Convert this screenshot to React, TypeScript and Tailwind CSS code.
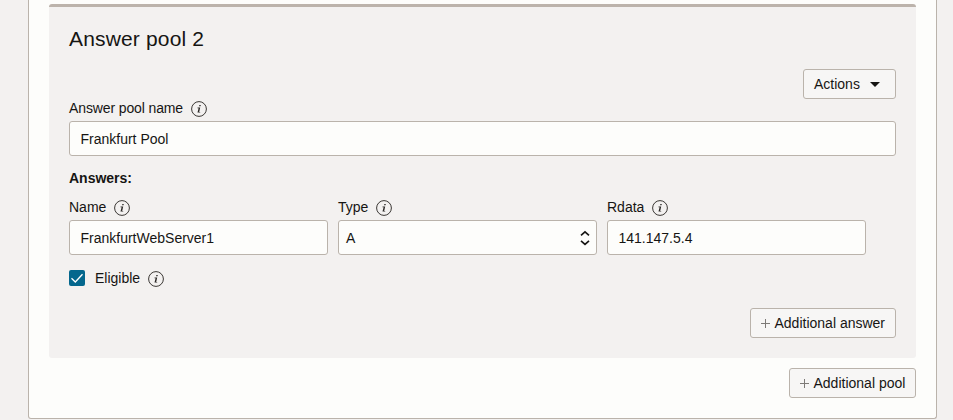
import type { ReactNode } from "react";

function InfoIcon() {
  return (
    <svg className="mt-px block h-4 w-4 shrink-0" viewBox="0 0 16 16" fill="none">
      <circle cx="8" cy="8" r="7.4" stroke="#3a3734" strokeWidth="1" />
      <path d="M8.4 3.9h1.4l-.3 1.4H8.1z" fill="#2b2826" />
      <path d="M6.6 6.6h2.6l-1 4.3h1.1l-.2.7H6.5l1.1-4.3H6.4z" fill="#2b2826" />
    </svg>
  );
}

function Label({ children, tight = false }: { children: ReactNode; tight?: boolean }) {
  return (
    <div className="flex h-[18px] items-center gap-2 leading-[18px]">
      <span className={tight ? "tracking-[-0.12px]" : ""}>{children}</span>
      <InfoIcon />
    </div>
  );
}

function Field({ label, value, select = false, tight = false }: { label: string; value: string; select?: boolean; tight?: boolean }) {
  return (
    <div className="flex flex-col gap-1">
      <Label tight={tight}>{label}</Label>
      <div
        className={`flex h-[35px] items-center justify-between rounded-[3px] border border-[#bab3ab] bg-[#fdfdfb] pr-[6px] ${select ? "pl-[7px]" : "pl-[10.5px]"}`}
      >
        <span>{value}</span>
        {select && (
          <svg className="mt-px block h-4 w-[10px]" viewBox="0 0 10 16" fill="none" stroke="#161513" strokeWidth="1.7">
            <path d="M1 5.3 5 1.9l4 3.4M1 10.9l4 3.4 4-3.4" />
          </svg>
        )}
      </div>
    </div>
  );
}

function AddButton({ width, children }: { width: string; children: ReactNode }) {
  return (
    <button
      className={`${width} flex h-[30px] items-center gap-[4.5px] rounded-[3px] border border-[#bab3ab] bg-[#f7f6f5] pl-[10px] whitespace-nowrap`}
    >
      <svg className="mt-px block h-[9px] w-[9px] shrink-0" viewBox="0 0 9 9" stroke="#7d7a77">
        <path d="M4.5 0v9M0 4.5h9" />
      </svg>
      {children}
    </button>
  );
}

export default function App() {
  return (
    <div className="h-[420px] w-[953px] overflow-hidden bg-[#f3f1f0] pl-7 font-['Liberation_Sans',Arial,sans-serif] text-sm text-[#161513]">
      <div className="flex h-[419px] w-[909px] flex-col rounded-b-[3px] border border-t-0 border-[#bab3ab] bg-[#fdfdfb] px-5 pt-1">
        <section className="h-[354px] rounded-[3px] border-t-[3px] border-[#bcb3ab] bg-[#f3f1f0] px-5 pt-5">
          <h2 className="h-6 text-[21px] leading-6 tracking-[0.16px]">Answer pool 2</h2>
          <div className="mt-[18px] flex justify-end">
            <button className="flex h-[30px] w-[93px] items-center gap-[10px] rounded-[3px] border border-[#bab3ab] bg-[#f7f6f5] pl-[10px]">
              Actions
              <svg className="mt-px block h-[5px] w-[10px]" viewBox="0 0 10 5" fill="#161513">
                <path d="M0 0h10L5 5z" />
              </svg>
            </button>
          </div>
          <Field label="Answer pool name" value="Frankfurt Pool" tight />
          <div className="mt-[13px] font-bold leading-[18px]">Answers:</div>
          <div className="mt-[11px] grid grid-cols-[259px_259px_259px] gap-[10px]">
            <Field label="Name" value="FrankfurtWebServer1" />
            <Field label="Type" value="A" select />
            <Field label="Rdata" value="141.147.5.4" />
          </div>
          <div className="mt-[14px] flex h-[18px] items-center gap-[10px]">
            <svg className="block h-4 w-4" viewBox="0 0 16 16">
              <rect width="16" height="16" rx="2" fill="#04678d" />
              <path d="M2.5 8.2 6.3 12l7.2-7.8" fill="none" stroke="#fff" strokeWidth="1.3" />
            </svg>
            <Label>Eligible</Label>
          </div>
          <div className="mt-[21px] flex justify-end">
            <AddButton width="w-[146px]">Additional answer</AddButton>
          </div>
        </section>
        <div className="mt-[10px] flex justify-end">
          <AddButton width="w-[127px]">Additional pool</AddButton>
        </div>
      </div>
    </div>
  );
}
